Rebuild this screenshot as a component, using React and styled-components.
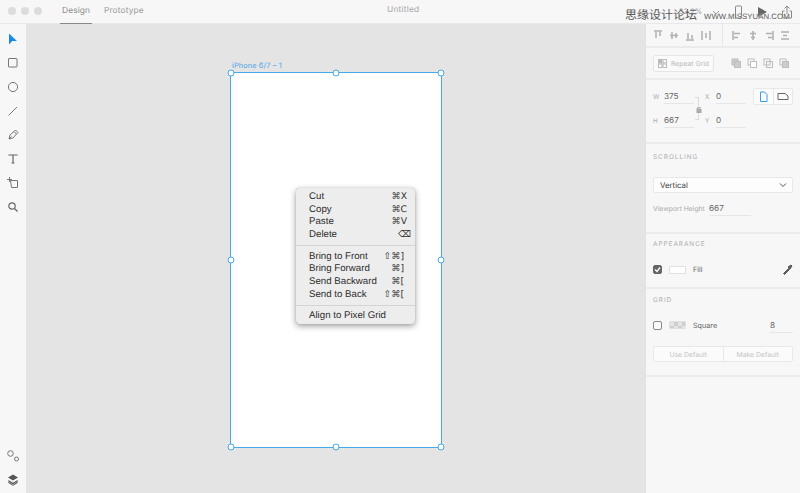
import React from "react";
import styled, { createGlobalStyle } from "styled-components";

const Global = createGlobalStyle`
  html, body { margin: 0; padding: 0; height: 100%; overflow: hidden; background: #f7f7f7; }
  #root { height: 100%; }
  * { box-sizing: border-box; }
`;
const Page = styled.div`
  width: 800px; height: 493px; position: relative; overflow: hidden;
  display: flex; flex-direction: column; background: #f7f7f7; text-rendering: geometricPrecision;
  font-family: "Inter", "Liberation Sans", sans-serif; color: #555;
`;
const TitleBar = styled.header`
  height: 24px; flex: none; display: flex; align-items: center; position: relative;
  background: #f7f7f7; border-bottom: 1px solid #e9e9e9;
`;
const Lights = styled.div`display: flex; gap: 5px; padding-left: 8px; width: 60px; margin-top: -1px;`;
const Light = styled.span`width: 8px; height: 8px; border-radius: 50%; background: #dcdcdc;`;
const Tab = styled.div`
  height: 24px; padding: 0 2px 1px; margin-right: 10px; display: flex; align-items: center;
  font-size: 8.4px; letter-spacing: .1px; color: ${p => (p.$active ? "#8a8a8a" : "#999")};
  border-bottom: 1px solid ${p => (p.$active ? "#888" : "transparent")};
`;
const DocTitle = styled.div`
  position: absolute; left: 387px; top: 5px; font-size: 8.4px; color: #a6a6a6; letter-spacing: .2px;
`;
const BarRight = styled.div`
  margin-left: auto; display: flex; align-items: center; color: #999;
  padding-right: 7px; gap: 14px; font-size: 7.5px;
`;
const Zoom = styled.span`margin-right: -4px;`;
const Body = styled.div`flex: 1; display: flex; min-height: 0;`;
const Tools = styled.nav`
  width: 26px; flex: none; display: flex; flex-direction: column; align-items: center;
  padding: 3px 0 1px; background: #f7f7f7;
`;
const ToolSlot = styled.div`width: 14px; height: 24px; display: flex; align-items: center; justify-content: center; flex: none;`;
const Spacer = styled.div`flex: 1;`;
const Canvas = styled.main`flex: 1; background: #e4e4e4; position: relative;`;
const ArtLabel = styled.div`
  position: absolute; left: 206px; top: 37px; font-size: 7.4px; color: #4da6e8; letter-spacing: .1px;
`;
const Artboard = styled.div`
  position: absolute; left: 204px; top: 48px; width: 212px; height: 376px;
  background: #fff; border: 1px solid #45a9ec;
`;
const Handle = styled.span`
  position: absolute; width: 7px; height: 7px; border-radius: 50%; background: #fff; border: 1px solid #45a9ec;
  transform: translate(-50%, -50%); left: ${p => p.$x}%; top: ${p => p.$y}%; margin: -.5px 0 0 -.5px;
`;
const Menu = styled.div`
  position: absolute; left: 270px; top: 164px; width: 119px; height: 136px;
  background: #ededed; border-radius: 4px; padding: 2px 0 0;
  box-shadow: 0 2px 6px rgba(0,0,0,.4), 0 0 1px rgba(0,0,0,.3);
  font-family: "Liberation Sans", Arial, sans-serif; font-size: 9.7px; color: #2e2e2e;
`;
const MenuRow = styled.div`
  height: 12.7px; display: flex; align-items: center; justify-content: space-between;
  padding: 0 ${p => p.$pad || 8}px 0 13px; white-space: nowrap;
`;
const Shortcut = styled.span`font-family: "DejaVu Sans", sans-serif; font-size: 9.2px; color: #333; letter-spacing: 0;`;
const MenuSep = styled.div`height: 1px; background: #d4d4d4; margin: 4px 0;`;
const Panel = styled.aside`
  width: 155px; flex: none; background: #f7f7f7; border-left: 1px solid #e2e2e2; display: flex; flex-direction: column;
`;
const Section = styled.section`
  height: ${p => p.$h}px; flex: none; border-bottom: 2px solid #ebebeb; padding: ${p => p.$pad || "0 7px"};
  display: flex; flex-direction: ${p => p.$row ? "row" : "column"};
  align-items: ${p => p.$row ? "center" : "stretch"};
`;
const AlignGroup = styled.div`display: flex; align-items: center; gap: ${p => p.$gap}px; height: 100%;`;
const VRule = styled.div`width: 1px; align-self: stretch; background: #e8e8e8; margin: 0 9px 0 11px;`;
const GhostButton = styled.div`
  width: 61px; height: 17px; border: 1px solid #e6e6e6; border-radius: 2px; background: #fafafa;
  display: flex; align-items: center; justify-content: center; gap: 4px; font-size: 6.8px; color: #b8b8b8;
`;
const IconRow = styled.div`display: flex; gap: 5px; margin-left: auto; margin-right: 3px;`;
const DimGrid = styled.div`display: flex; align-items: flex-start; position: relative; height: 100%;`;
const DimCols = styled.div`display: grid; grid-template-columns: 30px 30px; column-gap: 22px; row-gap: 8px; margin-top: 8px;`;
const Field = styled.div`
  display: flex; align-items: center; height: 16px; border-bottom: 1px solid #e6e6e6;
  font-size: 8.2px; color: #666; padding-left: ${p => p.$indent || 0}px; position: relative; width: ${p => p.$w || 30}px;
`;
const FieldKey = styled.span`
  font-size: 6.4px; color: #aaa; position: absolute; left: -11px; top: 5px;
`;
const Linker = styled.div`
  position: absolute; left: 31px; top: 17px; width: 4px; height: 23px;
  border: 1px solid #dcdcdc; border-left: 0;
`;
const Lock = styled.span`
  position: absolute; right: -4px; top: 8px; width: 6px; height: 7px; background: #f7f7f7; display: flex;
`;
const Segment = styled.div`
  display: flex; width: 40px; height: 17px; border: 1px solid #e8e8e8; border-radius: 2px; background: #fbfbfb;
  margin: 8px 0 0 auto;
`;
const SegPart = styled.div`
  flex: 1; display: flex; align-items: center; justify-content: center;
  & + & { border-left: 1px solid #e8e8e8; }
`;
const SectionTitle = styled.div`font-size: 6.4px; letter-spacing: 1px; color: #adadad; line-height: 8px;`;
const Select = styled.div`
  height: 16px; margin-top: 16px; background: #fdfdfd; border: 1px solid #e8e8e8; border-radius: 2px;
  display: flex; align-items: center; justify-content: space-between; padding: 0 5px 0 6px;
  font-size: 7.8px; color: #3a3a3a;
`;
const Viewport = styled.div`display: flex; align-items: center; margin-top: 7px;`;
const Muted = styled.span`font-size: 6.8px; color: #aaa; width: 56px; white-space: nowrap;`;
const Row = styled.div`display: flex; align-items: center; margin-top: ${p => p.$mt || 0}px;`;
const Check = styled.div`
  width: 9px; height: 9px; border-radius: 2px; flex: none; display: flex; align-items: center; justify-content: center;
  background: ${p => p.$on ? "#666" : "#fbfbfb"}; border: 1px solid ${p => p.$on ? "#666" : "#888"};
`;
const Swatch = styled.div`
  width: 17px; height: 8px; margin: 0 7px; border: 1px solid #e0e0e0; border-radius: 1px; flex: none;
  background: ${p => p.$check ? "repeating-conic-gradient(#cfcfcf 0 25%, #e4e4e4 0 50%) 0 0 / 8px 8px" : "#fff"};
`;
const Label = styled.span`font-size: 7.2px; color: #666;`;
const ButtonPair = styled.div`
  display: flex; height: 16px; margin-top: 13px; border: 1px solid #e8e8e8; border-radius: 2px; background: #fbfbfb;
`;
const PairPart = styled.div`
  flex: 1; display: flex; align-items: center; justify-content: center; font-size: 6.8px; color: #c4c4c4;
  & + & { border-left: 1px solid #e8e8e8; }
`;
const Watermark = styled.div`
  position: absolute; left: 625px; top: 7px; display: flex; align-items: center; gap: 7px; white-space: nowrap;
  color: #555; text-shadow: 0 0 1px #fff;
`;
const WmCn = styled.span`font-family: "Noto Sans CJK SC", sans-serif; font-size: 12px; line-height: 15px;`;
const WmEn = styled.span`font-family: "Liberation Sans", sans-serif; font-size: 7.8px; letter-spacing: .05px; margin-top: 3px;`;

const S = ({ w = 14, h = 14, vb, children, stroke = "#777", fill = "none", sw = 1 }) => (
  <svg width={w} height={h} viewBox={vb || `0 0 ${w} ${h}`} fill={fill} stroke={stroke} strokeWidth={sw}>{children}</svg>
);

const tools = [
  <S key="a" stroke="none" fill="#1b8ae6"><path d="M3 1.5v11l3.2-3.4H11z" /></S>,
  <S key="b"><rect x="2.5" y="2.5" width="8.5" height="8.5" rx=".5" /></S>,
  <S key="c"><circle cx="7" cy="7" r="4.6" /></S>,
  <S key="d"><path d="M2.5 11.5l8.5-8.5" /></S>,
  <S key="e"><path d="M3 11l1-4 4-3.5 2.5 2.5L7 10zM3 11l2.5-2.5M8 3.5l1.5-1.5 2.5 2.5-1.5 1.5" /></S>,
  <S key="f" stroke="#666" sw="1.2"><path d="M3 3.5V3h8v.5M7 3v8M5.5 11h3" /></S>,
  <S key="g"><path d="M4.5 4.5h7v7h-6zM1 3.5h5M3.5 1v5" /></S>,
  <S key="h" stroke="#666" sw="1.2"><circle cx="6" cy="6" r="3.2" /><path d="M8.5 8.5l3 3" /></S>,
];
const Bars = ({ d }) => <S w={10} h={11} stroke="#b0b0b0" sw="1.5">
  <path d={d} />
</S>;
const alignA = ["M1 1h8M3 2v6M7 2v4", "M1 5.5h8M3 2v7M7 3v5", "M1 10h8M3 3v6M7 5v4", "M1 1v9M9 1v9M5 3v5"];
const alignB = ["M1 1v9M2 3.5h6M2 7.5h4", "M5 1v9M2 3.5h6M3 7.5h4", "M9 1v9M2 3.5h6M4 7.5h4", "M1 2h8M1 9h8M3 5.5h4"];
const Bool = ({ k }) => <S w={11} h={11} stroke="#bdbdbd">
  <rect x="1" y="1" width="6" height="6" fill={k === 0 ? "#ccc" : "none"} />
  <rect x="3.5" y="3.5" width="6" height="6" fill={k === 1 ? "#fff" : k === 3 ? "#ccc" : k === 0 ? "#ccc" : "none"} />
</S>;

const menu = [
  [["Cut", "⌘X"], ["Copy", "⌘C"], ["Paste", "⌘V"], ["Delete", "⌫", 4]],
  [["Bring to Front", "⇧⌘]", 11], ["Bring Forward", "⌘]", 11], ["Send Backward", "⌘[", 11], ["Send to Back", "⇧⌘[", 11]],
  [["Align to Pixel Grid", ""]],
];
const handles = [[0, 0], [50, 0], [100, 0], [0, 50], [100, 50], [0, 100], [50, 100], [100, 100]];

export default function App() {
  return (
    <Page>
      <Global />
      <TitleBar>
        <Lights><Light /><Light /><Light /></Lights>
        <Tab $active>Design</Tab>
        <Tab>Prototype</Tab>
        <DocTitle>Untitled</DocTitle>
        <BarRight>
          <Zoom>33.2%</Zoom>
          <S w={8} h={8} stroke="#999"><path d="M1 3l3 3 3-3" /></S>
          <S w={9} h={14} stroke="#888"><rect x="1.5" y="1" width="6" height="12" rx="1" /></S>
          <S w={10} h={12} stroke="none" fill="#666"><path d="M1 1l9 5-9 5z" /></S>
          <S w={12} h={14} stroke="#888"><path d="M3.5 6H1.5v7h9V6H8.500M6 9V1M3.500 3.500L6 1l2.500 2.500" /></S>
        </BarRight>
      </TitleBar>
      <Body>
        <Tools>
          {tools.map((t, i) => <ToolSlot key={i}>{t}</ToolSlot>)}
          <Spacer />
          <ToolSlot>
            <S><circle cx="4.500" cy="4.500" r="2.800" /><circle cx="10.500" cy="10" r="2" /></S>
          </ToolSlot>
          <ToolSlot>
            <S stroke="none" fill="#555"><path d="M7 1.500l5 3-5 3-5-3zM2.800 7.200L7 9.700l4.200-2.500 1 .8-5.200 3.200L1.800 8zM2.800 9l4.200 2.700L11.200 9l.8.700-5 3-5-3z" /></S>
          </ToolSlot>
        </Tools>
        <Canvas>
          <ArtLabel>iPhone 6/7 – 1</ArtLabel>
          <Artboard>
            {handles.map(([x, y]) => <Handle key={`${x}-${y}`} $x={x} $y={y} />)}
          </Artboard>
          <Menu>
            {menu.map((group, g) => (
              <React.Fragment key={g}>
                {g > 0 && <MenuSep />}
                {group.map(([l, s, pad]) => (
                  <MenuRow key={l} $pad={pad}><span>{l}</span><Shortcut>{s}</Shortcut></MenuRow>
                ))}
              </React.Fragment>
            ))}
          </Menu>
        </Canvas>
        <Panel>
          <Section $h={24} $row $pad="0 0 0 7px">
            <AlignGroup $gap={6}>{alignA.map(d => <Bars key={d} d={d} />)}</AlignGroup>
            <VRule />
            <AlignGroup $gap={6}>{alignB.map(d => <Bars key={d} d={d} />)}</AlignGroup>
          </Section>
          <Section $h={32} $row>
            <GhostButton>
              <S w={9} h={9} stroke="#bbb"><rect x=".5" y=".5" width="3.500" height="3.500" fill="#bbb" /><rect x="5" y=".5" width="3.500" height="3.500" /><rect x=".5" y="5" width="3.500" height="3.500" /><rect x="5" y="5" width="3.500" height="3.500" /></S>
              Repeat Grid
            </GhostButton>
            <IconRow>{[0, 1, 2, 3].map(k => <Bool key={k} k={k} />)}</IconRow>
          </Section>
          <Section $h={64} $pad="0 7px 0 18px">
            <DimGrid>
              <DimCols>
                <Field><FieldKey>W</FieldKey>375</Field>
                <Field><FieldKey>X</FieldKey>0</Field>
                <Field><FieldKey>H</FieldKey>667</Field>
                <Field><FieldKey>Y</FieldKey>0</Field>
              </DimCols>
              <Linker>
                <Lock><S w={6} h={7} stroke="#aaa"><rect x="1" y="3" width="4" height="3.500" fill="#aaa" /><path d="M1.500 3V1.500h3" /></S></Lock>
              </Linker>
              <Segment>
                <SegPart><S w={9} h={11} stroke="#3a9de6"><path d="M1.500 1h4L8 3.500v7H1.500z" /></S></SegPart>
                <SegPart><S w={12} h={9} stroke="#666"><path d="M1 1.500h7L11 4v3.500H1z" /></S></SegPart>
              </Segment>
            </DimGrid>
          </Section>
          <Section $h={90} $pad="9px 7px 0">
            <SectionTitle>SCROLLING</SectionTitle>
            <Select>Vertical<S w={8} h={6} stroke="#555"><path d="M1 1.500l3 3 3-3" /></S></Select>
            <Viewport>
              <Muted>Viewport Height</Muted>
              <Field $w={42}>667</Field>
            </Viewport>
          </Section>
          <Section $h={55} $pad="6px 7px 0">
            <SectionTitle>APPEARANCE</SectionTitle>
            <Row $mt={16}>
              <Check $on><S w={7} h={7} stroke="#fff" sw="1.300"><path d="M1 3.500l2 2L6 1.500" /></S></Check>
              <Swatch />
              <Label>Fill</Label>
              <Spacer />
              <S w={11} h={11} stroke="#555"><path d="M1.500 9.500l5-5 1 1-5 5zM6 3l3-2 1 1-2 3z" fill="#666" /></S>
            </Row>
          </Section>
          <Section $h={88} $pad="7px 7px 0">
            <SectionTitle>GRID</SectionTitle>
            <Row $mt={13}>
              <Check />
              <Swatch $check />
              <Label>Square</Label>
              <Spacer />
              <Field $w={23}>8</Field>
            </Row>
            <ButtonPair>
              <PairPart>Use Default</PairPart>
              <PairPart>Make Default</PairPart>
            </ButtonPair>
          </Section>
        </Panel>
      </Body>
      <Watermark><WmCn>思缘设计论坛</WmCn><WmEn>WWW.MISSYUAN.COM</WmEn></Watermark>
    </Page>
  );
}
